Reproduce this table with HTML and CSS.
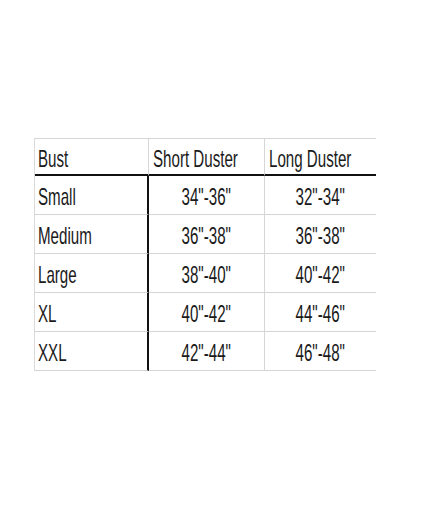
FILE: index.html
```html
<!DOCTYPE html>
<html>
<head>
<meta charset="utf-8">
<link rel="stylesheet" href="styles.css">
</head>
<body>
<div class="page">
  <div class="chart">
    <div class="cell head first"><span class="txt left">Bust</span></div>
    <div class="cell head mid"><span class="txt left">Short Duster</span></div>
    <div class="cell head last"><span class="txt left">Long Duster</span></div>

    <div class="cell first"><span class="txt left">Small</span></div>
    <div class="cell mid num"><span class="txt">34"-36"</span></div>
    <div class="cell last num"><span class="txt">32"-34"</span></div>

    <div class="cell first"><span class="txt left">Medium</span></div>
    <div class="cell mid num"><span class="txt">36"-38"</span></div>
    <div class="cell last num"><span class="txt">36"-38"</span></div>

    <div class="cell first"><span class="txt left">Large</span></div>
    <div class="cell mid num"><span class="txt">38"-40"</span></div>
    <div class="cell last num"><span class="txt">40"-42"</span></div>

    <div class="cell first"><span class="txt left">XL</span></div>
    <div class="cell mid num"><span class="txt">40"-42"</span></div>
    <div class="cell last num"><span class="txt">44"-46"</span></div>

    <div class="cell first"><span class="txt left">XXL</span></div>
    <div class="cell mid num"><span class="txt">42"-44"</span></div>
    <div class="cell last num"><span class="txt">46"-48"</span></div>
  </div>
</div>
</body>
</html>
```
FILE: styles.css
```css
html, body {
  margin: 0;
  padding: 0;
  background: #ffffff;
}
.page {
  padding: 138px 0 0 34px;
  font-family: "Liberation Sans", Arial, sans-serif;
  color: #1a1a1a;
}
.chart {
  display: grid;
  grid-template-columns: 114px 116px 111px;
  width: 341px;
  border-top: 1px solid #d6d6d6;
  border-left: 1px solid #dadada;
}
.cell {
  box-sizing: border-box;
  height: 39px;
  border-bottom: 1px solid #d4d4d4;
  display: flex;
  align-items: center;
  padding-top: 3px;
  overflow: visible;
}
.cell.head {
  height: 37px;
  border-bottom: 2px solid #111111;
  padding-top: 4px;
}
.cell.first {
  padding-left: 3px;
  border-right: 2px solid #111111;
}
.cell.head.first {
  border-right: 1px solid #d6d6d6;
}
.cell.mid {
  border-right: 1px solid #d6d6d6;
  padding-left: 4px;
}
.cell.last {
  padding-left: 4px;
}
.cell.num {
  justify-content: center;
  padding-left: 0;
}
.txt {
  display: inline-block;
  font-size: 24px;
  line-height: 24px;
  white-space: nowrap;
  transform: scaleX(0.63);
  transform-origin: center;
}
.txt.left {
  transform-origin: left center;
}
```
